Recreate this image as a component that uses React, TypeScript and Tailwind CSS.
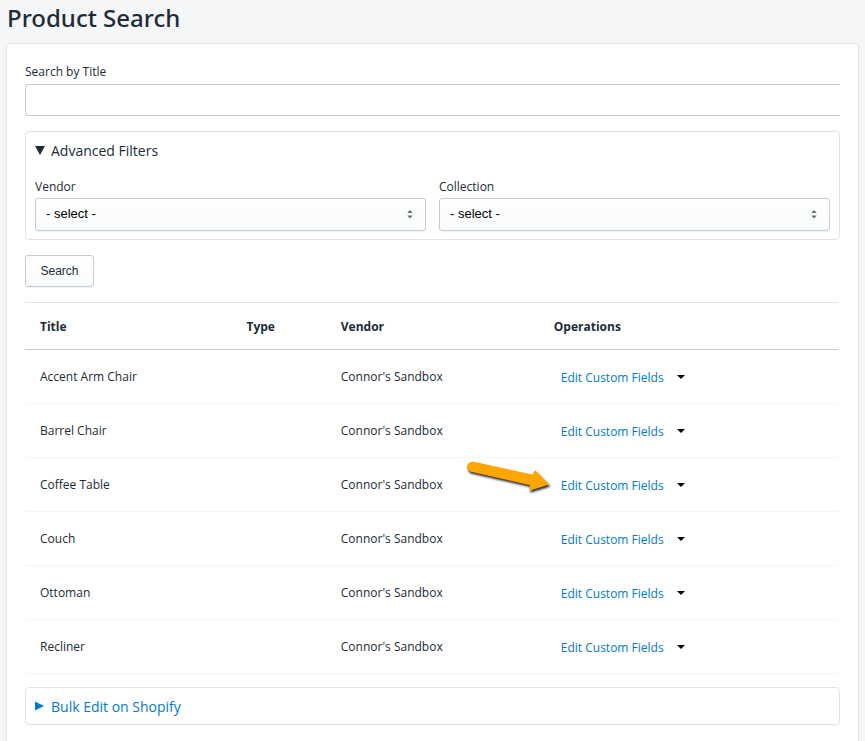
import { useState } from "react";

interface Product {
  id: number;
  title: string;
  type: string;
  vendor: string;
  highlighted?: boolean;
}

const products: Product[] = [
  { id: 1, title: "Accent Arm Chair", type: "", vendor: "Connor's Sandbox" },
  { id: 2, title: "Barrel Chair", type: "", vendor: "Connor's Sandbox" },
  { id: 3, title: "Coffee Table", type: "", vendor: "Connor's Sandbox", highlighted: true },
  { id: 4, title: "Couch", type: "", vendor: "Connor's Sandbox" },
  { id: 5, title: "Ottoman", type: "", vendor: "Connor's Sandbox" },
  { id: 6, title: "Recliner", type: "", vendor: "Connor's Sandbox" },
];

function FilterSelect({ id, label, options }: { id: string; label: string; options: string[] }) {
  return (
    <div className="min-w-0 flex-1">
      <label htmlFor={id} className="block text-[12px] leading-[22px]">
        {label}
      </label>
      <div className="relative">
        <select
          id={id}
          className="block h-[33px] w-full appearance-none rounded-[3px] border border-[#c4cdd5] bg-linear-to-b from-white to-[#f9fafb] pr-7 pb-0.5 pl-[10px] font-['Liberation_Sans',sans-serif] text-[13px] text-black shadow-[0_1px_0_rgba(22,29,37,0.05)]"
        >
          <option value="">- select -</option>
          {options.map((option) => (
            <option key={option}>{option}</option>
          ))}
        </select>
        <svg
          viewBox="0 0 6 9"
          className="pointer-events-none absolute top-[12px] right-[13px] h-[9px] w-[6px] fill-[#637381]"
          aria-hidden="true"
        >
          <path d="M3 0 L5.8 3 H0.2 Z M0.2 5.6 H5.8 L3 8.6 Z" />
        </svg>
      </div>
    </div>
  );
}

function PointerArrow() {
  return (
    <svg
      viewBox="0 0 90 42"
      className="pointer-events-none absolute top-0 -left-[74px] h-[42px] w-[90px] drop-shadow-[1px_2px_1px_rgba(0,0,0,0.85)]"
      aria-hidden="true"
    >
      <path
        fill="#ffa500"
        d="M8.5 3.8 L67.5 16.5 L70 12.2 L84.3 26.5 L64.3 32.8 L65.2 27.2 L6 13.8 A5.1 5.1 0 0 1 8.5 3.8 Z"
      />
    </svg>
  );
}

export default function ProductSearch() {
  const [title, setTitle] = useState("");

  return (
    <div className="flex min-h-screen flex-col bg-[#f4f6f8] px-[7px] font-['Open_Sans',sans-serif] text-[12px] text-[#212b36]">
      <h1 className="pb-2 font-['Noto_Sans',sans-serif] text-[24px] leading-9 font-medium">Product Search</h1>

      <main className="flex-1 rounded-t-[3px] bg-white px-[18px] pt-4 pb-8 shadow-[0_0_0_1px_rgba(63,63,68,0.05),0_1px_3px_rgba(63,63,68,0.15)]">
        <form onSubmit={(e) => e.preventDefault()}>
          <label htmlFor="title" className="block text-[12px] leading-6">
            Search by Title
          </label>
          <input
            id="title"
            type="text"
            value={title}
            onChange={(e) => setTitle(e.target.value)}
            className="block h-8 w-full rounded-l-[3px] border border-r-0 border-[#c4cdd5] bg-white px-3"
          />

          <details open className="group mt-[15px] rounded-[4px] border border-[#dfe3e8] px-[9px] pb-2">
            <summary className="flex h-[37px] cursor-pointer list-none items-center gap-[6px] text-[14px]">
              <svg viewBox="0 0 10 9" className="h-[9px] w-[10px] -rotate-90 fill-[#212b36] group-open:rotate-0" aria-hidden="true">
                <path d="M0 0 H10 L5 9 Z" />
              </svg>
              Advanced Filters
            </summary>
            <div className="flex gap-[13px] pt-[7px]">
              <FilterSelect id="vendor" label="Vendor" options={["Connor's Sandbox"]} />
              <FilterSelect id="collection" label="Collection" options={[]} />
            </div>
          </details>

          <button
            type="submit"
            className="mt-[15px] h-8 min-w-[69px] rounded-[3px] border border-[#c4cdd5] bg-linear-to-b from-white to-[#f9fafb] px-[14px] pb-px font-['Liberation_Sans',sans-serif] text-[12px] shadow-[0_1px_0_rgba(22,29,37,0.05)]"
          >
            Search
          </button>
        </form>

        <div className="mt-[15px] pr-0.5">
          <table className="w-full table-fixed border-collapse text-left">
            <thead>
              <tr className="h-[47px] border-t border-b border-t-[#dfe3e8] border-b-[#c4cdd5]">
                <th className="w-[25.4%] px-[15px] pt-0.5 font-bold">Title</th>
                <th className="w-[11.6%] px-[15px] pt-0.5 font-bold">Type</th>
                <th className="w-[26.2%] px-[15px] pt-0.5 font-bold">Vendor</th>
                <th className="px-[15px] pt-0.5 font-bold">Operations</th>
              </tr>
            </thead>
            <tbody>
              {products.map((product) => (
                <tr key={product.id} className="h-[54px] border-b border-[#f4f6f8]">
                  <td className="px-[15px]">{product.title}</td>
                  <td className="px-[15px]">{product.type}</td>
                  <td className="px-[15px]">{product.vendor}</td>
                  <td className="relative px-[15px]">
                    {product.highlighted && <PointerArrow />}
                    <div className="flex items-center pl-[7px]">
                      <a href="#edit" className="pt-0.5 text-[#007ace]">
                        Edit Custom Fields
                      </a>
                      <button type="button" aria-label={`More operations for ${product.title}`} className="px-[13px] py-2">
                        <svg viewBox="0 0 8 4" className="h-1 w-2 fill-black" aria-hidden="true">
                          <path d="M0 0 H8 L4 4 Z" />
                        </svg>
                      </button>
                    </div>
                  </td>
                </tr>
              ))}
            </tbody>
          </table>
        </div>

        <details className="group mt-[13px] rounded-[4px] border border-[#dfe3e8] px-[9px]">
          <summary className="flex h-9 cursor-pointer list-none items-center gap-[6px] text-[14px] text-[#007ace]">
            <svg viewBox="0 0 10 10" className="h-[10px] w-[10px] fill-[#007ace] group-open:rotate-90" aria-hidden="true">
              <path d="M0 0.5 L9 5 L0 9.5 Z" />
            </svg>
            Bulk Edit on Shopify
          </summary>
          <p className="pb-3">
            <a href="#bulk-edit" className="text-[#007ace]">
              Open the bulk editor
            </a>
          </p>
        </details>
      </main>
    </div>
  );
}
